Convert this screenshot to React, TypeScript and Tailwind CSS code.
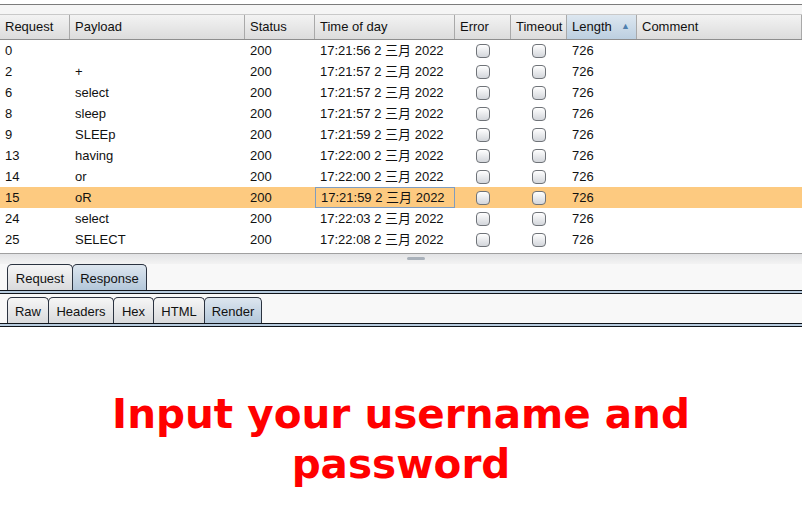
import React from "react";

const cols = [
  { name: "Request", w: 70 },
  { name: "Payload", w: 175 },
  { name: "Status", w: 70 },
  { name: "Time of day", w: 140 },
  { name: "Error", w: 56 },
  { name: "Timeout", w: 56 },
  { name: "Length", w: 70 },
  { name: "Comment", w: 165 },
];

const rows = [
  ["0", "", "17:21:56"],
  ["2", "+", "17:21:57"],
  ["6", "select", "17:21:57"],
  ["8", "sleep", "17:21:57"],
  ["9", "SLEEp", "17:21:59"],
  ["13", "having", "17:22:00"],
  ["14", "or", "17:22:00"],
  ["15", "oR", "17:21:59"],
  ["24", "select", "17:22:03"],
  ["25", "SELECT", "17:22:08"],
];

function Check() {
  return (
    <div className="w-[14px] h-[14px] rounded-[4px] border border-[#6f7378] bg-gradient-to-b from-[#ffffff] to-[#d3d6db]" />
  );
}

function Tab({ label, w, selected }: { label: string; w: number; selected?: boolean }) {
  return (
    <div
      style={{ width: w }}
      className={
        "h-[26px] -mr-px flex items-center justify-center pt-[2px] rounded-t-[5px] border border-b-0 border-[#2b3340] text-[13px] text-[#111] " +
        (selected
          ? "bg-gradient-to-b from-[#dde6ef] to-[#b3c7da]"
          : "bg-gradient-to-b from-[#f6f6f6] to-[#d9dadc]")
      }
    >
      {label}
    </div>
  );
}

function TabBase() {
  return (
    <div className="h-[4px] border-t border-b border-[#10141a] bg-[#b7cbde]" />
  );
}

export default function App() {
  return (
    <div
      className="w-[802px] h-[512px] bg-white overflow-hidden text-[13px] text-[#111]"
      style={{ fontFamily: '"Liberation Sans", Arial, "Noto Sans CJK SC", sans-serif' }}
    >
      <div className="h-[4px] bg-white" />
      <div className="h-[10px] border-t border-[#7c7c7c] bg-[#f5f5f5]" />
      {/* header */}
      <div className="flex h-[26px] border-t border-b border-[#c9c9c9] border-b-[#8e8e8e] bg-gradient-to-b from-[#f3f3f3] to-[#dcdcdc]">
        {cols.map((c) => (
          <div
            key={c.name}
            style={{ width: c.w }}
            className={
              "flex items-center pl-[5px] border-r border-[#a9a9a9] shrink-0 " +
              (c.name === "Length" ? "bg-gradient-to-b from-[#dde7f0] to-[#bccfe0] justify-between pr-[6px]" : "")
            }
          >
            <span>{c.name}</span>
            {c.name === "Length" && <span className="text-[9px] text-[#4f7fae]">▲</span>}
          </div>
        ))}
      </div>
      {/* rows */}
      <div className="h-[213px] bg-white">
        {rows.map((r, i) => {
          const sel = i === 7;
          return (
            <div key={r[0]} className={"flex h-[21px] items-center " + (sel ? "bg-[#fdca80]" : "")}>
              <div className="w-[70px] pl-[5px] shrink-0">{r[0]}</div>
              <div className="w-[175px] pl-[5px] shrink-0">{r[1]}</div>
              <div className="w-[70px] pl-[5px] shrink-0">200</div>
              <div
                className={
                  "w-[140px] pl-[5px] shrink-0 h-[21px] flex items-center " +
                  (sel ? "border border-[#7e9cc0] pl-[4px]" : "")
                }
              >
                {r[2]} 2 三月 2022
              </div>
              <div className="w-[56px] shrink-0 flex justify-center">
                <Check />
              </div>
              <div className="w-[56px] shrink-0 flex justify-center">
                <Check />
              </div>
              <div className="w-[70px] pl-[5px] shrink-0">726</div>
            </div>
          );
        })}
      </div>
      {/* splitter */}
      <div className="h-[11px] border-t border-[#a0a0a0] bg-gradient-to-b from-[#e2e3e5] to-[#f3f3f3] flex justify-center">
        <div className="mt-[3px] ml-[30px] w-[18px] h-[3px] rounded-full bg-[#a9b1ba]" />
      </div>
      {/* tab rows */}
      <div className="bg-[#f8f8f8]">
        <div className="flex pl-[7px]">
          <Tab label="Request" w={66} />
          <Tab label="Response" w={75} selected />
        </div>
        <TabBase />
        <div className="h-[3px]" />
        <div className="flex pl-[7px]">
          <Tab label="Raw" w={42} />
          <Tab label="Headers" w={66} />
          <Tab label="Hex" w={41} />
          <Tab label="HTML" w={52} />
          <Tab label="Render" w={58} selected />
        </div>
        <TabBase />
      </div>
      <div className="bg-white pt-[62px] flex justify-center">
        <h1
          className="text-center text-[40.5px] font-bold text-[#ff0000] leading-[50px] w-[700px]"
          style={{ fontFamily: '"DejaVu Sans", Verdana, sans-serif' }}
        >
          Input your username and password
        </h1>
      </div>
    </div>
  );
}
